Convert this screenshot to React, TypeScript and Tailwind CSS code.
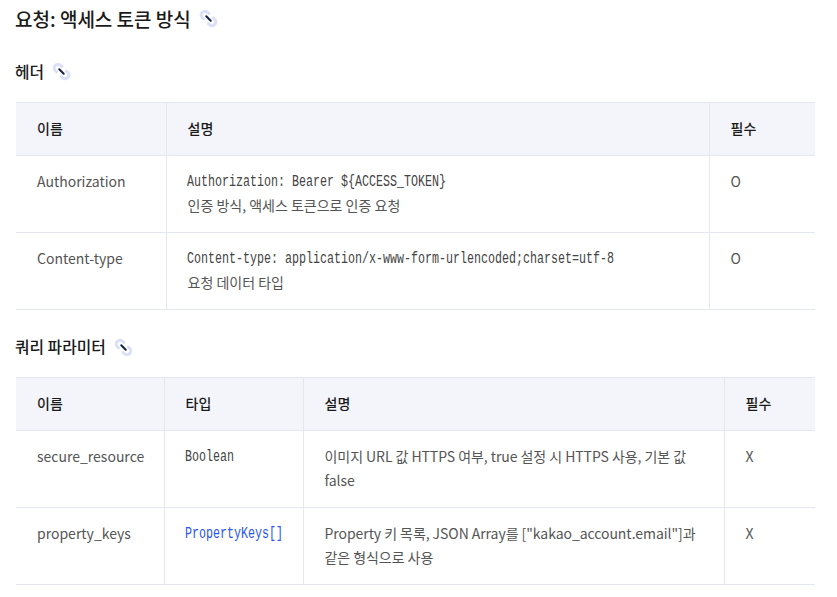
const kr = 'font-["Noto_Sans_CJK_KR","Noto_Sans",sans-serif]';

function LinkIcon({ className }: { className?: string }) {
  return (
    <svg width="19" height="19" viewBox="0 0 18 18" fill="none" className={className}>
      <path d="M9.3 4.3 7.8 2.8A3.6 3.6 0 0 0 2.8 7.8l1.5 1.5" stroke="#d9e0f8" strokeWidth="2.8" strokeLinecap="round" />
      <path d="M8.7 13.7l1.5 1.5a3.6 3.6 0 0 0 5-5l-1.5-1.5" stroke="#d9e0f8" strokeWidth="2.8" strokeLinecap="round" />
      <path d="M6.9 6.9l4.2 4.2" stroke="#1a2440" strokeWidth="2" strokeLinecap="round" />
    </svg>
  );
}

function Th({ children, className = '' }: { children: React.ReactNode; className?: string }) {
  return (
    <th className={`h-[53px] border-y border-[#e4e6f0] bg-[#f4f5fa] pb-[2px] pl-[21px] pr-2 text-left align-middle text-[14px] font-medium text-[#1a1a1a] ${className}`}>
      {children}
    </th>
  );
}

function Td({ children, className = '' }: { children: React.ReactNode; className?: string }) {
  return (
    <td className={`h-[77px] border-b border-[#e4e6f0] pb-[14px] pl-[21px] pr-5 pt-[13px] align-top text-[14px] leading-[24px] text-[#555555] ${className}`}>
      {children}
    </td>
  );
}

function Mono({ children, className = 'text-[#444444]' }: { children: React.ReactNode; className?: string }) {
  return <code className={`block origin-left -translate-x-[1px] translate-y-[1px] scale-x-[0.729] whitespace-nowrap font-["Liberation_Mono",monospace] text-[16px] leading-[24px] ${className}`}>{children}</code>;
}

export default function App() {
  const cellLine = 'border-l border-[#e4e6f0]';
  return (
    <div className={`h-[597px] w-[837px] overflow-hidden bg-white pl-4 pr-[22px] ${kr}`}>
      <h2 className="-ml-px flex h-[38px] items-center gap-2 text-[19px] font-medium text-[#1a1a1a]">
        요청: 액세스 토큰 방식 <LinkIcon className="-mt-0.5" />
      </h2>
      <h3 className="-ml-px mt-[21px] flex h-[26px] items-center gap-2 text-[15.8px] font-medium text-[#1a1a1a]">
        헤더 <LinkIcon className="-mt-0.5" />
      </h3>
      <table className="mt-[17px] w-[799px] table-fixed border-collapse">
        <colgroup>
          <col className="w-[150px]" />
          <col className="w-[543px]" />
          <col className="w-[106px]" />
        </colgroup>
        <thead>
          <tr>
            <Th>이름</Th>
            <Th className={cellLine}>설명</Th>
            <Th className={cellLine}>필수</Th>
          </tr>
        </thead>
        <tbody>
          <tr>
            <Td>Authorization</Td>
            <Td className={cellLine}>
              <Mono>Authorization: Bearer ${'{'}ACCESS_TOKEN{'}'}</Mono>
              인증 방식, 액세스 토큰으로 인증 요청
            </Td>
            <Td className={cellLine}>O</Td>
          </tr>
          <tr>
            <Td>Content-type</Td>
            <Td className={cellLine}>
              <Mono>Content-type: application/x-www-form-urlencoded;charset=utf-8</Mono>
              요청 데이터 타입
            </Td>
            <Td className={cellLine}>O</Td>
          </tr>
        </tbody>
      </table>
      <h3 className="-ml-px mt-[24px] flex h-[26px] items-center gap-2 text-[15.8px] font-medium text-[#1a1a1a]">
        쿼리 파라미터 <LinkIcon />
      </h3>
      <table className="mt-[17px] w-[799px] table-fixed border-collapse">
        <colgroup>
          <col className="w-[148px]" />
          <col className="w-[139px]" />
          <col className="w-[421px]" />
          <col className="w-[91px]" />
        </colgroup>
        <thead>
          <tr>
            <Th>이름</Th>
            <Th className={cellLine}>타입</Th>
            <Th className={cellLine}>설명</Th>
            <Th className={cellLine}>필수</Th>
          </tr>
        </thead>
        <tbody>
          <tr>
            <Td>secure_resource</Td>
            <Td className={cellLine}><Mono>Boolean</Mono></Td>
            <Td className={`${cellLine} tracking-[-0.06px]`}>이미지 URL 값 HTTPS 여부, true 설정 시 HTTPS 사용, 기본 값 false</Td>
            <Td className={cellLine}>X</Td>
          </tr>
          <tr>
            <Td>property_keys</Td>
            <Td className={cellLine}><Mono className="text-[#2a55f5]">PropertyKeys[]</Mono></Td>
            <Td className={`${cellLine} tracking-[-0.06px]`}>Property 키 목록, JSON Array를 ["kakao_account.email"]과 같은 형식으로 사용</Td>
            <Td className={cellLine}>X</Td>
          </tr>
        </tbody>
      </table>
    </div>
  );
}
